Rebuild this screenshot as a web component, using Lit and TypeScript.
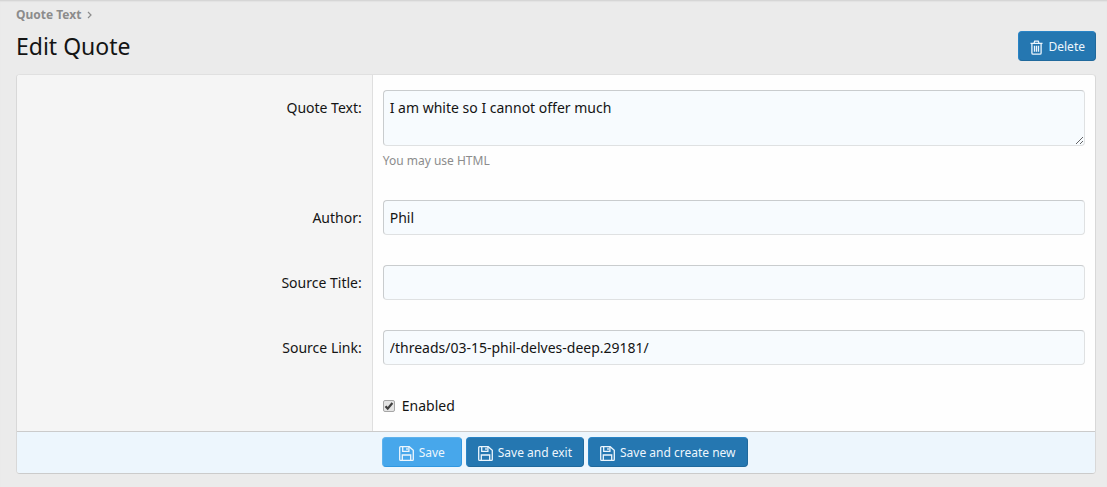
import { LitElement, html, css, svg } from "lit";
import { customElement, property } from "lit/decorators.js";

const saveIcon = svg`
  <path d="M.7 1.6q0-.9.9-.9h8.6l4.1 3.6v9.1q0 .9-.9.9H1.6q-.9 0-.9-.9z" />
  <path d="M3.7.9v4.5h6.2V.9M8 1.7v2.4" />
  <path d="M3.3 14.2V9h8.4v5.2" />`;

const trashIcon = svg`
  <path d="M1.5 3.3h12M5 3.1l.7-2h3.6l.7 2" />
  <path d="M2.9 3.5v9.4q0 1.2 1.2 1.2h6.8q1.2 0 1.2-1.2V3.5" />
  <path d="M5.5 5.8v6M7.5 5.8v6M9.5 5.8v6" />`;

@customElement("action-button")
export class ActionButton extends LitElement {
  @property() icon = "save";
  @property({ type: Boolean, reflect: true }) primary = false;

  static styles = css`
    :host { display: inline-flex; }
    button {
      display: flex;
      align-items: center;
      justify-content: center;
      gap: 5px;
      min-width: 78px;
      height: 30px;
      padding: 2px 10px 0;
      border: 1px solid;
      border-color: #2984c6 #20699c #20699c #2984c6;
      border-radius: 4px;
      background: #2577b1;
      color: #edf6fd;
      font: 12px/18px "Noto Sans", "Open Sans", sans-serif;
      white-space: nowrap;
      cursor: pointer;
    }
    :host([primary]) button {
      min-width: 80px;
      background: #47a7eb;
      border-color: #5eb2ed #3097e0 #3097e0 #5eb2ed;
    }
    :host(:not([icon="trash"]):not([primary])) button { padding: 2px 11px 0; }
    svg {
      width: 15px;
      height: 15px;
      fill: none;
      stroke: currentColor;
      stroke-width: 1.3;
    }
  `;

  render() {
    return html`<button type="button">
      <svg viewBox="0 0 15 15" aria-hidden="true">${this.icon === "trash" ? trashIcon : saveIcon}</svg>
      <slot></slot>
    </button>`;
  }
}

@customElement("app-root")
export class AppRoot extends LitElement {
  static styles = css`
    :host {
      display: block;
      box-sizing: border-box;
      min-height: 100vh;
      padding: 4px 11px 13px 16px;
      background: #ebebeb;
      box-shadow: inset 0 2px 2px -1px #cfcfcf;
      color: #141414;
      font: 14px/21px "Noto Sans", "Open Sans", sans-serif;
    }
    * { box-sizing: border-box; }
    .crumbs {
      display: flex;
      align-items: center;
      gap: 6px;
      height: 20px;
      font-size: 12px;
      font-weight: 700;
      color: #8c8c8c;
    }
    .crumbs a { color: inherit; text-decoration: none; }
    .crumbs svg { width: 5px; height: 8px; margin-top: 2px; fill: none; stroke: currentColor; stroke-width: 1.2; }
    .header {
      display: flex;
      align-items: center;
      justify-content: space-between;
      margin: 7px 0 13px;
    }
    h1 { margin: 0; font-size: 23px; line-height: 30px; font-weight: 400; }
    form {
      border: 1px solid;
      border-color: #e0e0e0 #d8d8d8 #cbcbcb #d8d8d8;
      border-radius: 4px;
      background: #fefefe;
      overflow: hidden;
    }
    .row { display: grid; grid-template-columns: 33% 1fr; }
    .term {
      padding: 22px 10px 15px;
      border-right: 1px solid #dfdfdf;
      background: #f5f5f5;
      text-align: right;
    }
    .field { padding: 15px 10px; min-width: 0; }
    .input {
      display: block;
      width: 100%;
      height: 35px;
      margin: 0;
      padding: 6px;
      border: 1px solid;
      border-color: #c9ccce #dfe1e2 #dfe1e2 #c9ccce;
      border-radius: 4px;
      background: #f7fbfe;
      color: #141414;
      font: inherit;
      outline: none;
    }
    textarea.input { height: 56px; resize: vertical; }
    .hint { padding-top: 6px; font-size: 12px; line-height: 18px; color: #8c8c8c; }
    .choice { display: flex; align-items: center; gap: 7px; }
    .choice input {
      appearance: none;
      width: 12px;
      height: 12px;
      margin: 0;
      border: 1px solid #a6a6a6;
      border-radius: 2px;
      background: #e4e4e4;
    }
    .choice input:checked {
      background: url("data:image/svg+xml,%3Csvg xmlns='http://www.w3.org/2000/svg' viewBox='0 0 10 10'%3E%3Cpath d='M1.5 5.3l2.2 2.3L8.4 2' fill='none' stroke='%23404040' stroke-width='2.2'/%3E%3C/svg%3E") center / 10px 10px #e4e4e4;
    }
    .submit {
      display: flex;
      flex-wrap: wrap;
      gap: 4px;
      padding: 5px 10px 6px calc(33% + 9px);
      border-top: 1px solid #cbcbcb;
      background: #edf6fd;
    }
  `;

  private textRow(id: string, label: string, value: string) {
    return html`<div class="row">
      <div class="term"><label for=${id}>${label}:</label></div>
      <div class="field"><input class="input" type="text" id=${id} .value=${value} /></div>
    </div>`;
  }

  render() {
    return html`
      <nav class="crumbs">
        <a href="#">Quote Text</a>
        <svg viewBox="0 0 5 8" aria-hidden="true"><path d="M1 1l3 3-3 3" /></svg>
      </nav>
      <div class="header">
        <h1>Edit Quote</h1>
        <action-button icon="trash">Delete</action-button>
      </div>
      <form>
        <div class="row">
          <div class="term"><label for="quote">Quote Text:</label></div>
          <div class="field">
            <textarea class="input" id="quote" spellcheck="false" .value=${"I am white so I cannot offer much"}></textarea>
            <div class="hint">You may use HTML</div>
          </div>
        </div>
        ${this.textRow("author", "Author", "Phil")}
        ${this.textRow("title", "Source Title", "")}
        ${this.textRow("link", "Source Link", "/threads/03-15-phil-delves-deep.29181/")}
        <div class="row">
          <div class="term"></div>
          <div class="field">
            <label class="choice"><input type="checkbox" checked />Enabled</label>
          </div>
        </div>
        <div class="submit">
          <action-button primary>Save</action-button>
          <action-button>Save and exit</action-button>
          <action-button>Save and create new</action-button>
        </div>
      </form>
    `;
  }
}
